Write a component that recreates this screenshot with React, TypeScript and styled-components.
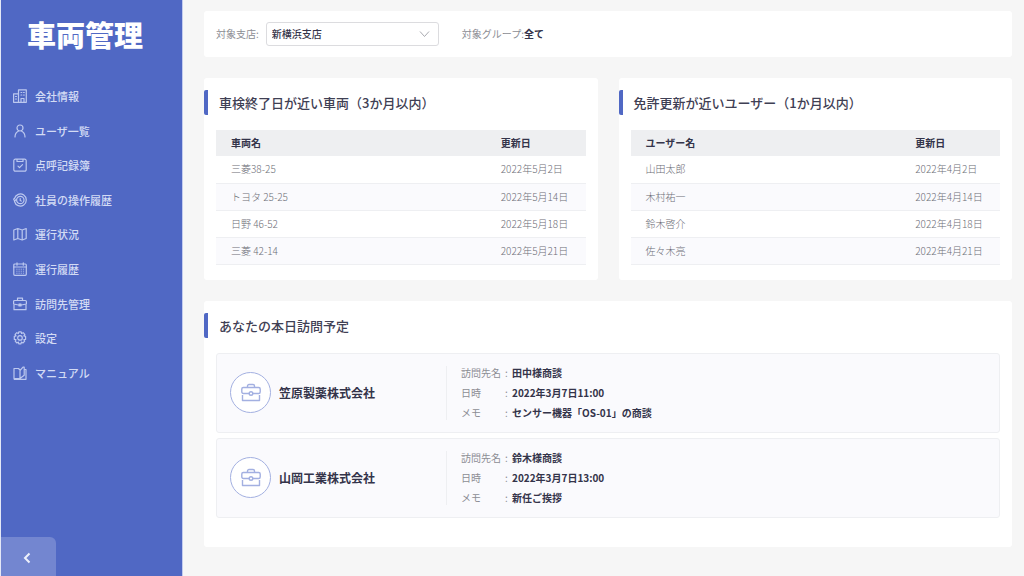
import React from "react";
import styled, { createGlobalStyle } from "styled-components";

const color = {
  brand: "#5068c4",
  brandSoft: "#7386d0",
  navText: "#d3dbf4",
  navIcon: "#bcc8ef",
  page: "#f6f6f6",
  ink: "#34344a",
  heading: "#3f4054",
  muted: "#8c8d94",
  line: "#eeeff2",
  stripe: "#fafafd",
};

const GlobalStyle = createGlobalStyle`
  *, *::before, *::after { box-sizing: border-box; }
  body {
    margin: 0;
    background: ${color.page};
    color: ${color.ink};
    font-family: "Noto Sans CJK JP", "Noto Sans", sans-serif;
    font-size: 10px;
    line-height: 20px;
  }
  h1, h2, h3, dl, dd, ul { margin: 0; padding: 0; }
`;

const Shell = styled.div`
  display: flex;
  min-height: 100vh;
`;

const Sidebar = styled.aside`
  display: flex;
  flex-direction: column;
  flex: 0 0 183px;
  background: ${color.brand};
  border-left: 1px solid #e4e8f6;
  border-right: 1px solid #c3ccee;
`;

const Brand = styled.h1`
  padding: 14px 0 0 26px;
  color: #fff;
  font-size: 29px;
  font-weight: 900;
  line-height: 40px;
`;

const NavList = styled.ul`
  display: grid;
  grid-auto-rows: 1fr;
  min-height: 311px;
  margin-top: 25px;
  list-style: none;
`;

const NavLink = styled.a`
  display: flex;
  align-items: center;
  gap: 8px;
  height: 100%;
  padding-left: 12px;
  color: ${color.navText};
  font-size: 11px;
  font-weight: 500;
  text-decoration: none;
`;

const NavIcon = styled.svg`
  flex: none;
  width: 14px;
  height: 14px;
  fill: none;
  stroke: ${color.navIcon};
  stroke-width: 1.2;
  stroke-linecap: round;
  stroke-linejoin: round;
`;

const CollapseButton = styled.button`
  display: flex;
  align-items: center;
  justify-content: center;
  width: 55px;
  height: 39px;
  margin-top: auto;
  padding: 0 4px 0 0;
  border: 0;
  border-radius: 0 6px 0 0;
  background: ${color.brandSoft};
  cursor: pointer;

  svg {
    width: 10px;
    height: 12px;
    margin-top: 2px;
    fill: none;
    stroke: #eef1fb;
    stroke-width: 2;
  }
`;

const Main = styled.main`
  display: flex;
  flex: 1;
  flex-direction: column;
  gap: 21px;
  min-width: 0;
  padding: 11px 12px 29px 21px;
`;

const Card = styled.section`
  padding: 12px 12px 16px;
  border-radius: 3px;
  background: #fff;
`;

const FilterBar = styled(Card)`
  display: flex;
  align-items: center;
  gap: 23px;
  padding: 11px 12px;
`;

const Field = styled.div`
  display: flex;
  align-items: center;
  gap: 7px;
`;

const Muted = styled.span`
  color: ${color.muted};
`;

const FieldLabel = styled.label`
  color: ${color.muted};
`;

const SelectBox = styled.div`
  position: relative;

  svg {
    position: absolute;
    top: 8px;
    right: 9px;
    width: 11px;
    height: 8px;
    fill: none;
    stroke: #a9aab0;
    pointer-events: none;
  }
`;

const Select = styled.select`
  display: block;
  width: 173px;
  height: 24px;
  padding: 0 24px 0 5px;
  appearance: none;
  border: 1px solid #dcdcdf;
  border-radius: 3px;
  background: #fff;
  color: ${color.ink};
  font: inherit;
  font-weight: 500;
`;

const Columns = styled.div`
  display: grid;
  grid-template-columns: 1fr 1fr;
  gap: 21px;
`;

const CardTitle = styled.h2`
  margin: 0 0 15px -12px;
  padding-left: 11px;
  border-left: 4px solid ${color.brand};
  border-radius: 2px;
  color: ${color.heading};
  font-size: 13px;
  font-weight: 500;
  line-height: 25px;
`;

const RenewalPanel = styled(Card)`
  padding-bottom: 15px;
`;

const Table = styled.table`
  width: 100%;
  table-layout: fixed;
  border-collapse: collapse;
  text-align: left;

  th,
  td {
    padding: 0 0 0 15px;
  }

  th {
    height: 26px;
    background: #eeeff1;
    font-weight: 700;
  }

  th:first-child {
    width: 73%;
  }

  td {
    height: 27px;
    border-bottom: 1px solid ${color.line};
    color: #6c6d76;
    font-weight: 300;
  }

  tbody tr:nth-child(even) {
    background: ${color.stripe};
  }
`;

const VisitCard = styled(Card)`
  padding-bottom: 29px;
`;

const VisitList = styled.ul`
  display: grid;
  gap: 5px;
  list-style: none;
`;

const Visit = styled.li`
  display: flex;
  align-items: center;
  height: 80px;
  padding: 0 13px;
  border: 1px solid ${color.line};
  border-radius: 3px;
  background: ${color.stripe};
`;

const Client = styled.div`
  display: flex;
  align-items: center;
  gap: 8px;
  flex: 0 0 217px;
  height: 54px;
  border-right: 1px solid ${color.line};
`;

const ClientBadge = styled.span`
  display: grid;
  place-items: center;
  width: 41px;
  height: 41px;
  border: 1px solid #a3b0e1;
  border-radius: 50%;
  background: #fff;

  svg {
    width: 20px;
    height: 20px;
    fill: none;
    stroke: #a3b0e1;
    stroke-width: 1.4;
    stroke-linejoin: round;
  }
`;

const ClientName = styled.h3`
  font-size: 12px;
  font-weight: 700;
`;

const Details = styled.dl`
  padding-left: 14px;
`;

const DetailRow = styled.div`
  display: grid;
  grid-template-columns: 44px 7px auto;

  dt {
    color: ${color.muted};
  }

  dd {
    font-weight: 700;
  }
`;

const navItems: { label: string; icon: React.ReactNode }[] = [
  {
    label: "会社情報",
    icon: <path d="M.6 13.300V4.800H5.500V13.300M5.500 7V.8H13.300V13.300H.6M2.500 7.500h1M2.500 10h1M8 3.500h.8M10.500 3.500h.8M8 6h.8M10.500 6h.8M8 13V9.500h3V13" />,
  },
  {
    label: "ユーザ一覧",
    icon: (
      <>
        <circle cx="7" cy="4" r="3" />
        <path d="M2 13c0-3 1.500-5 3.500-6M12 13c0-3-1.500-5-3.500-6" />
      </>
    ),
  },
  {
    label: "点呼記録簿",
    icon: <path d="M3.500 1.200H2.300A1.500 1.500 0 0 0 .8 2.700v9a1.500 1.500 0 0 0 1.500 1.500h9.400a1.500 1.500 0 0 0 1.500-1.500v-9a1.500 1.500 0 0 0-1.500-1.500H3.500M4 1.200v2.300h6V1.200M5 8.200l1.500 1.500 3-3" />,
  },
  {
    label: "社員の操作履歴",
    icon: (
      <>
        <path d="M1.500 5.500a6 6 0 1 1 0 3M.6 6l1 2L3.200 6.500" />
        <circle cx="7.300" cy="7" r="3.700" />
        <path d="M7.200 5.500v2l1 .6" />
      </>
    ),
  },
  {
    label: "運行状況",
    icon: <path d="M.8 3L4.800 1.500v10L.8 13zM4.800 1.500l4.400 1.500v10l-4.400-1.500M9.200 3l4-1.500v10l-4 1.500" />,
  },
  {
    label: "運行履歴",
    icon: (
      <>
        <rect x=".8" y="2" width="12.500" height="11.300" rx="1" />
        <path d="M.8 5h12.500M4 .8v2.400M10.300 .8v2.400" />
        <path d="M3.300 7.200h8M3.300 9.200h8M3.300 11.200h8" strokeWidth=".8" strokeLinecap="butt" strokeDasharray="1.200 1" />
      </>
    ),
  },
  {
    label: "訪問先管理",
    icon: <path d="M1.600 3.500h10.800a1 1 0 0 1 1 1V7L8.500 8h-3L.6 7V4.500a1 1 0 0 1 1-1zM1 8V12.700h12V8M4.500 3.500V1.200h5v2.300M6 7h2v2H6z" />,
  },
  {
    label: "設定",
    icon: (
      <>
        <path d="M5.800 .9h2.400l.4 1.600 1.500-.8 1.700 1.700-.9 1.500 1.700.5v2.900l-1.700.4.8 1.500-1.800 1.800-1.500-.9-.4 1.700H5.800l-.4-1.700-1.500.9-1.700-1.800.8-1.500-1.700-.4V5.400l1.700-.5-.9-1.500 1.700-1.700 1.500.8z" />
        <circle cx="7" cy="6.900" r="2.300" />
      </>
    ),
  },
  {
    label: "マニュアル",
    icon: <path d="M1 2.500h4.500L7 4v8.500H1zM7 4.500L10 1.200h1.200v8L7 12.500M11.200 3.500H13v9.800H1.200" />,
  },
];

const vehicles = [
  ["三菱38-25", "2022年5月2日"],
  ["トヨタ 25-25", "2022年5月14日"],
  ["日野 46-52", "2022年5月18日"],
  ["三菱 42-14", "2022年5月21日"],
];

const users = [
  ["山田太郎", "2022年4月2日"],
  ["木村祐一", "2022年4月14日"],
  ["鈴木啓介", "2022年4月18日"],
  ["佐々木亮", "2022年4月21日"],
];

const visits = [
  { client: "笠原製薬株式会社", details: [["訪問先名", "田中様商談"], ["日時", "2022年3月7日11:00"], ["メモ", "センサー機器「OS-01」の商談"]] },
  { client: "山岡工業株式会社", details: [["訪問先名", "鈴木様商談"], ["日時", "2022年3月7日13:00"], ["メモ", "新任ご挨拶"]] },
];

function RenewalCard({ title, nameHeader, rows }: { title: string; nameHeader: string; rows: string[][] }) {
  return (
    <RenewalPanel>
      <CardTitle>{title}</CardTitle>
      <Table>
        <thead>
          <tr>
            <th scope="col">{nameHeader}</th>
            <th scope="col">更新日</th>
          </tr>
        </thead>
        <tbody>
          {rows.map(([name, date]) => (
            <tr key={name}>
              <td>{name}</td>
              <td>{date}</td>
            </tr>
          ))}
        </tbody>
      </Table>
    </RenewalPanel>
  );
}

function BriefcaseIcon() {
  return (
    <svg viewBox="0 0 20 20" aria-hidden="true">
      <rect x=".8" y="4.500" width="18.400" height="6" rx="1.500" />
      <path d="M1.500 12v5.500h17V12M6.500 4.500V3a1.500 1.500 0 0 1 1.500-1.500h4A1.500 1.500 0 0 1 13.500 3v1.500" />
      <circle cx="10" cy="10.500" r="1.800" fill="#fff" />
    </svg>
  );
}

export default function App() {
  return (
    <>
      <GlobalStyle />
      <Shell>
        <Sidebar>
          <Brand>車両管理</Brand>
          <nav>
            <NavList>
              {navItems.map(({ label, icon }) => (
                <li key={label}>
                  <NavLink href="#">
                    <NavIcon viewBox="0 0 14 14" aria-hidden="true">{icon}</NavIcon>
                    {label}
                  </NavLink>
                </li>
              ))}
            </NavList>
          </nav>
          <CollapseButton type="button" aria-label="メニューを閉じる">
            <svg viewBox="0 0 10 12" aria-hidden="true">
              <path d="M7.500 1.500L3 6l4.500 4.500" />
            </svg>
          </CollapseButton>
        </Sidebar>
        <Main>
          <FilterBar>
            <Field>
              <FieldLabel htmlFor="branch">対象支店:</FieldLabel>
              <SelectBox>
                <Select id="branch" defaultValue="新横浜支店">
                  <option>新横浜支店</option>
                </Select>
                <svg viewBox="0 0 11 8" aria-hidden="true">
                  <path d="M1 1.500l4.500 5 4.500-5" />
                </svg>
              </SelectBox>
            </Field>
            <div>
              <Muted>対象グループ:</Muted>
              <strong>全て</strong>
            </div>
          </FilterBar>
          <Columns>
            <RenewalCard title="車検終了日が近い車両（3か月以内）" nameHeader="車両名" rows={vehicles} />
            <RenewalCard title="免許更新が近いユーザー（1か月以内）" nameHeader="ユーザー名" rows={users} />
          </Columns>
          <VisitCard>
            <CardTitle>あなたの本日訪問予定</CardTitle>
            <VisitList>
              {visits.map(({ client, details }) => (
                <Visit key={client}>
                  <Client>
                    <ClientBadge>
                      <BriefcaseIcon />
                    </ClientBadge>
                    <ClientName>{client}</ClientName>
                  </Client>
                  <Details>
                    {details.map(([term, value]) => (
                      <DetailRow key={term}>
                        <dt>{term}</dt>
                        <Muted as="dt" aria-hidden="true">:</Muted>
                        <dd>{value}</dd>
                      </DetailRow>
                    ))}
                  </Details>
                </Visit>
              ))}
            </VisitList>
          </VisitCard>
        </Main>
      </Shell>
    </>
  );
}
